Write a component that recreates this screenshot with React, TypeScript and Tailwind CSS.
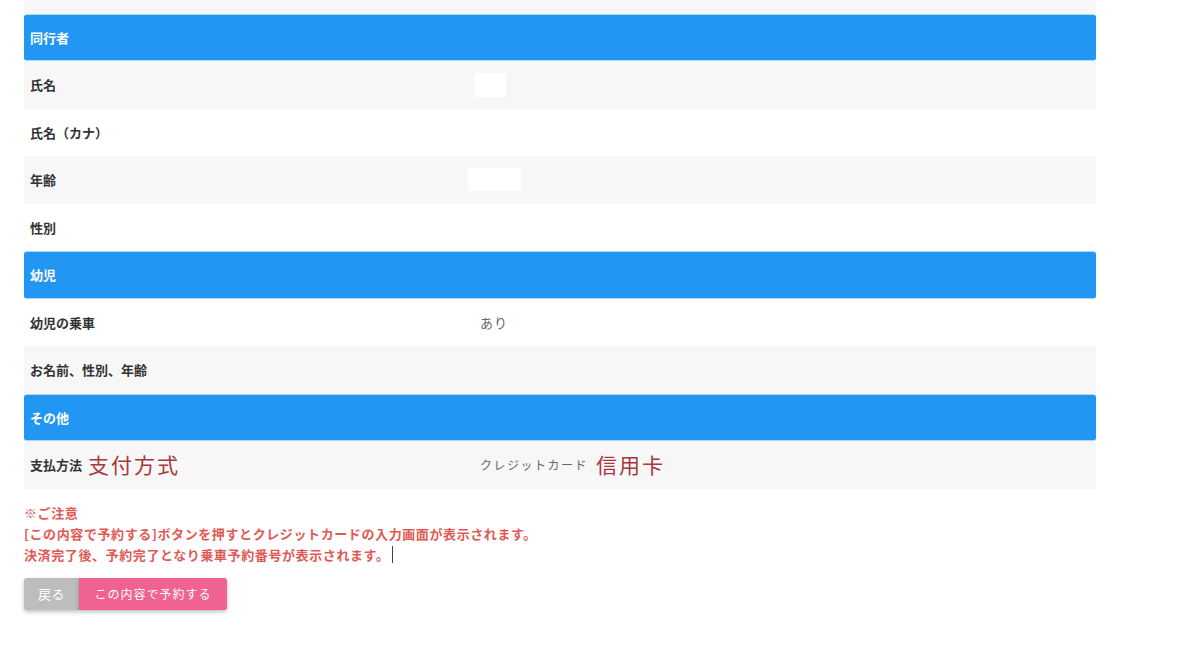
const font = { fontFamily: '"Noto Sans CJK JP", "Noto Sans", sans-serif' }

type Row =
  | { kind: 'head'; label: string }
  | { kind: 'row'; label: string; bg: 'gray' | 'white'; value?: React.ReactNode; note?: string }

const ROWS: Row[] = [
  { kind: 'head', label: '同行者' },
  { kind: 'row', label: '氏名', bg: 'gray', value: <div className="-ml-[6px] w-[32px] h-[24px] bg-white" /> },
  { kind: 'row', label: '氏名（カナ）', bg: 'white' },
  { kind: 'row', label: '年齢', bg: 'gray', value: <div className="-ml-[12px] w-[53px] h-[23px] bg-white" /> },
  { kind: 'row', label: '性別', bg: 'white' },
  { kind: 'head', label: '幼児' },
  { kind: 'row', label: '幼児の乗車', bg: 'white', value: <span className="text-[13px] text-[#666] tracking-[1px]">あり</span> },
  { kind: 'row', label: 'お名前、性別、年齢', bg: 'gray' },
  { kind: 'head', label: 'その他' },
  {
    kind: 'row',
    label: '支払方法',
    bg: 'gray',
    note: '支付方式',
    value: (
      <div className="flex items-center gap-[8px]">
        <span className="text-[12px] text-[#666] tracking-[1.5px]">クレジットカード</span>
        <span className="text-[21px] text-[#a8383c] tracking-[2px]">信用卡</span>
      </div>
    ),
  },
]

export default function App() {
  return (
    <div className="w-[1200px] h-[656px] bg-white overflow-hidden" style={font}>
      <div className="ml-6 w-[1072px]">
        <div className="h-[13.5px] bg-[#f7f7f7]" />
        {ROWS.map((r, i) =>
          r.kind === 'head' ? (
            <div
              key={i}
              className="h-[47.5px] flex items-center px-[6px] bg-[#2196f3] rounded-[3px] border-y border-[#a8dcfb] text-white text-[13px] font-bold"
            >
              {r.label}
            </div>
          ) : (
            <div key={i} className={`h-[47.5px] flex items-center ${r.bg === 'gray' ? 'bg-[#f7f7f7]' : 'bg-white'}`}>
              <div className="w-[450px] pl-[6px] flex items-center gap-[6px]">
                <span className="text-[13px] font-bold text-[#333]">{r.label}</span>
                {r.note && <span className="text-[21px] text-[#a8383c] tracking-[2px]">{r.note}</span>}
              </div>
              <div className="pl-[6px] flex items-center">{r.value}</div>
            </div>
          )
        )}
        <div className="mt-[13px] text-[13px] font-bold text-[#e05a55] leading-[21px] tracking-[0.6px]">
          <p>
            <span className="font-normal">※</span>ご注意
          </p>
          <p>[この内容で予約する]ボタンを押すとクレジットカードの入力画面が表示されます。</p>
          <p className="flex items-center">
            決済完了後、予約完了となり乗車予約番号が表示されます。
            <span className="ml-[2px] inline-block w-px h-[17px] bg-[#444]" />
          </p>
        </div>
        <div className="mt-[13px] flex">
          <button className="h-[32px] w-[55px] bg-[#bdbdbd] text-white text-[13px] rounded-l-[3px] shadow-[0_2px_4px_rgba(0,0,0,0.25)] tracking-[0.5px]">
            戻る
          </button>
          <button className="h-[32px] w-[148px] bg-[#f06292] text-white text-[12px] rounded-r-[3px] shadow-[0_2px_4px_rgba(0,0,0,0.25)] tracking-[1px]">
            この内容で予約する
          </button>
        </div>
      </div>
    </div>
  )
}
